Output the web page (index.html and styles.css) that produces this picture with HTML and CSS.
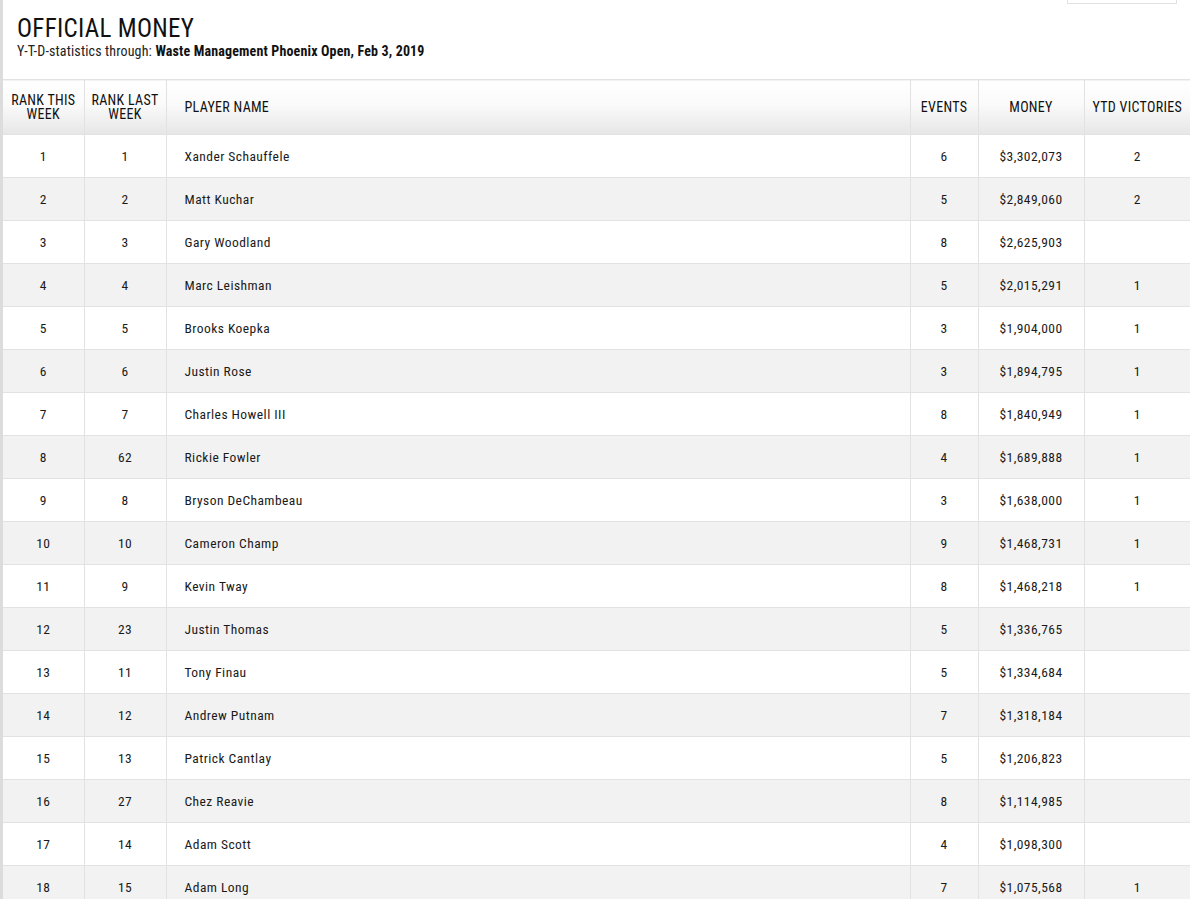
FILE: index.html
```html
<!DOCTYPE html>
<html>
<head>
<meta charset="utf-8">
<link rel="stylesheet" href="styles.css">
</head>
<body>
<div class="page">
  <div class="topbox"></div>
  <div class="head">
    <h1 class="title">OFFICIAL MONEY</h1>
    <div class="sub">Y-T-D-statistics through: <b>Waste Management Phoenix Open, Feb 3, 2019</b></div>
  </div>
  <table class="stats">
    <colgroup>
      <col class="c1"><col class="c2"><col class="c3"><col class="c4"><col class="c5"><col class="c6">
    </colgroup>
    <thead>
      <tr>
        <th>RANK THIS<br>WEEK</th>
        <th>RANK LAST<br>WEEK</th>
        <th class="name">PLAYER NAME</th>
        <th>EVENTS</th>
        <th>MONEY</th>
        <th>YTD VICTORIES</th>
      </tr>
    </thead>
    <tbody>
      <tr><td>1</td><td>1</td><td class="name">Xander Schauffele</td><td>6</td><td>$3,302,073</td><td>2</td></tr>
      <tr><td>2</td><td>2</td><td class="name">Matt Kuchar</td><td>5</td><td>$2,849,060</td><td>2</td></tr>
      <tr><td>3</td><td>3</td><td class="name">Gary Woodland</td><td>8</td><td>$2,625,903</td><td></td></tr>
      <tr><td>4</td><td>4</td><td class="name">Marc Leishman</td><td>5</td><td>$2,015,291</td><td>1</td></tr>
      <tr><td>5</td><td>5</td><td class="name">Brooks Koepka</td><td>3</td><td>$1,904,000</td><td>1</td></tr>
      <tr><td>6</td><td>6</td><td class="name">Justin Rose</td><td>3</td><td>$1,894,795</td><td>1</td></tr>
      <tr><td>7</td><td>7</td><td class="name">Charles Howell III</td><td>8</td><td>$1,840,949</td><td>1</td></tr>
      <tr><td>8</td><td>62</td><td class="name">Rickie Fowler</td><td>4</td><td>$1,689,888</td><td>1</td></tr>
      <tr><td>9</td><td>8</td><td class="name">Bryson DeChambeau</td><td>3</td><td>$1,638,000</td><td>1</td></tr>
      <tr><td>10</td><td>10</td><td class="name">Cameron Champ</td><td>9</td><td>$1,468,731</td><td>1</td></tr>
      <tr><td>11</td><td>9</td><td class="name">Kevin Tway</td><td>8</td><td>$1,468,218</td><td>1</td></tr>
      <tr><td>12</td><td>23</td><td class="name">Justin Thomas</td><td>5</td><td>$1,336,765</td><td></td></tr>
      <tr><td>13</td><td>11</td><td class="name">Tony Finau</td><td>5</td><td>$1,334,684</td><td></td></tr>
      <tr><td>14</td><td>12</td><td class="name">Andrew Putnam</td><td>7</td><td>$1,318,184</td><td></td></tr>
      <tr><td>15</td><td>13</td><td class="name">Patrick Cantlay</td><td>5</td><td>$1,206,823</td><td></td></tr>
      <tr><td>16</td><td>27</td><td class="name">Chez Reavie</td><td>8</td><td>$1,114,985</td><td></td></tr>
      <tr><td>17</td><td>14</td><td class="name">Adam Scott</td><td>4</td><td>$1,098,300</td><td></td></tr>
      <tr><td>18</td><td>15</td><td class="name">Adam Long</td><td>7</td><td>$1,075,568</td><td>1</td></tr>
    </tbody>
  </table>
</div>
</body>
</html>
```
FILE: styles.css
```css
html, body {
  margin: 0;
  padding: 0;
  background: #fff;
  overflow: hidden;
}
body {
  font-family: "Roboto Condensed", "Roboto", "Liberation Sans Narrow", sans-serif;
  color: #1a1a1a;
}
.page {
  position: relative;
  border-left: 3px solid #dcdcdc;
  min-height: 899px;
}
.topbox {
  position: absolute;
  top: -20px;
  left: 1064px;
  width: 108px;
  height: 22px;
  border: 1px solid #e2e2e2;
}
.head {
  padding: 15px 0 20px 14px;
}
.title {
  margin: 0;
  font-weight: 400;
  font-size: 25px;
  line-height: 28px;
  letter-spacing: 0.3px;
  color: #111;
}
.sub {
  font-size: 14px;
  line-height: 16px;
  letter-spacing: 0.15px;
  color: #222;
}
.sub b {
  font-weight: 700;
  color: #111;
}
.stats {
  border-collapse: collapse;
  width: 1187px;
  table-layout: fixed;
  font-size: 13.5px;
}
.c1 { width: 81px; }
.c2 { width: 82px; }
.c3 { width: 744px; }
.c4 { width: 68px; }
.c5 { width: 106px; }
.c6 { width: 106px; }
.stats th {
  height: 54px;
  padding: 0 2px;
  font-weight: 400;
  font-size: 14px;
  line-height: 14px;
  letter-spacing: 0.3px;
  text-align: center;
  color: #111;
  background: linear-gradient(to bottom, #ffffff 0%, #fafafa 45%, #e6e6e6 100%);
  border-top: 1px solid #e2e2e2;
  border-bottom: 1px solid #e2e2e2;
}
.stats th + th, .stats td + td {
  border-left: 1px solid #e2e2e2;
}
.stats td {
  height: 42px;
  padding: 0 2px;
  text-align: center;
  letter-spacing: 0.45px;
  border-bottom: 1px solid #e2e2e2;
  color: #1a1a1a;
}
.stats .name {
  text-align: left;
  padding-left: 18px;
}
.stats tbody tr:nth-child(even) td {
  background: #f2f2f2;
}
```
